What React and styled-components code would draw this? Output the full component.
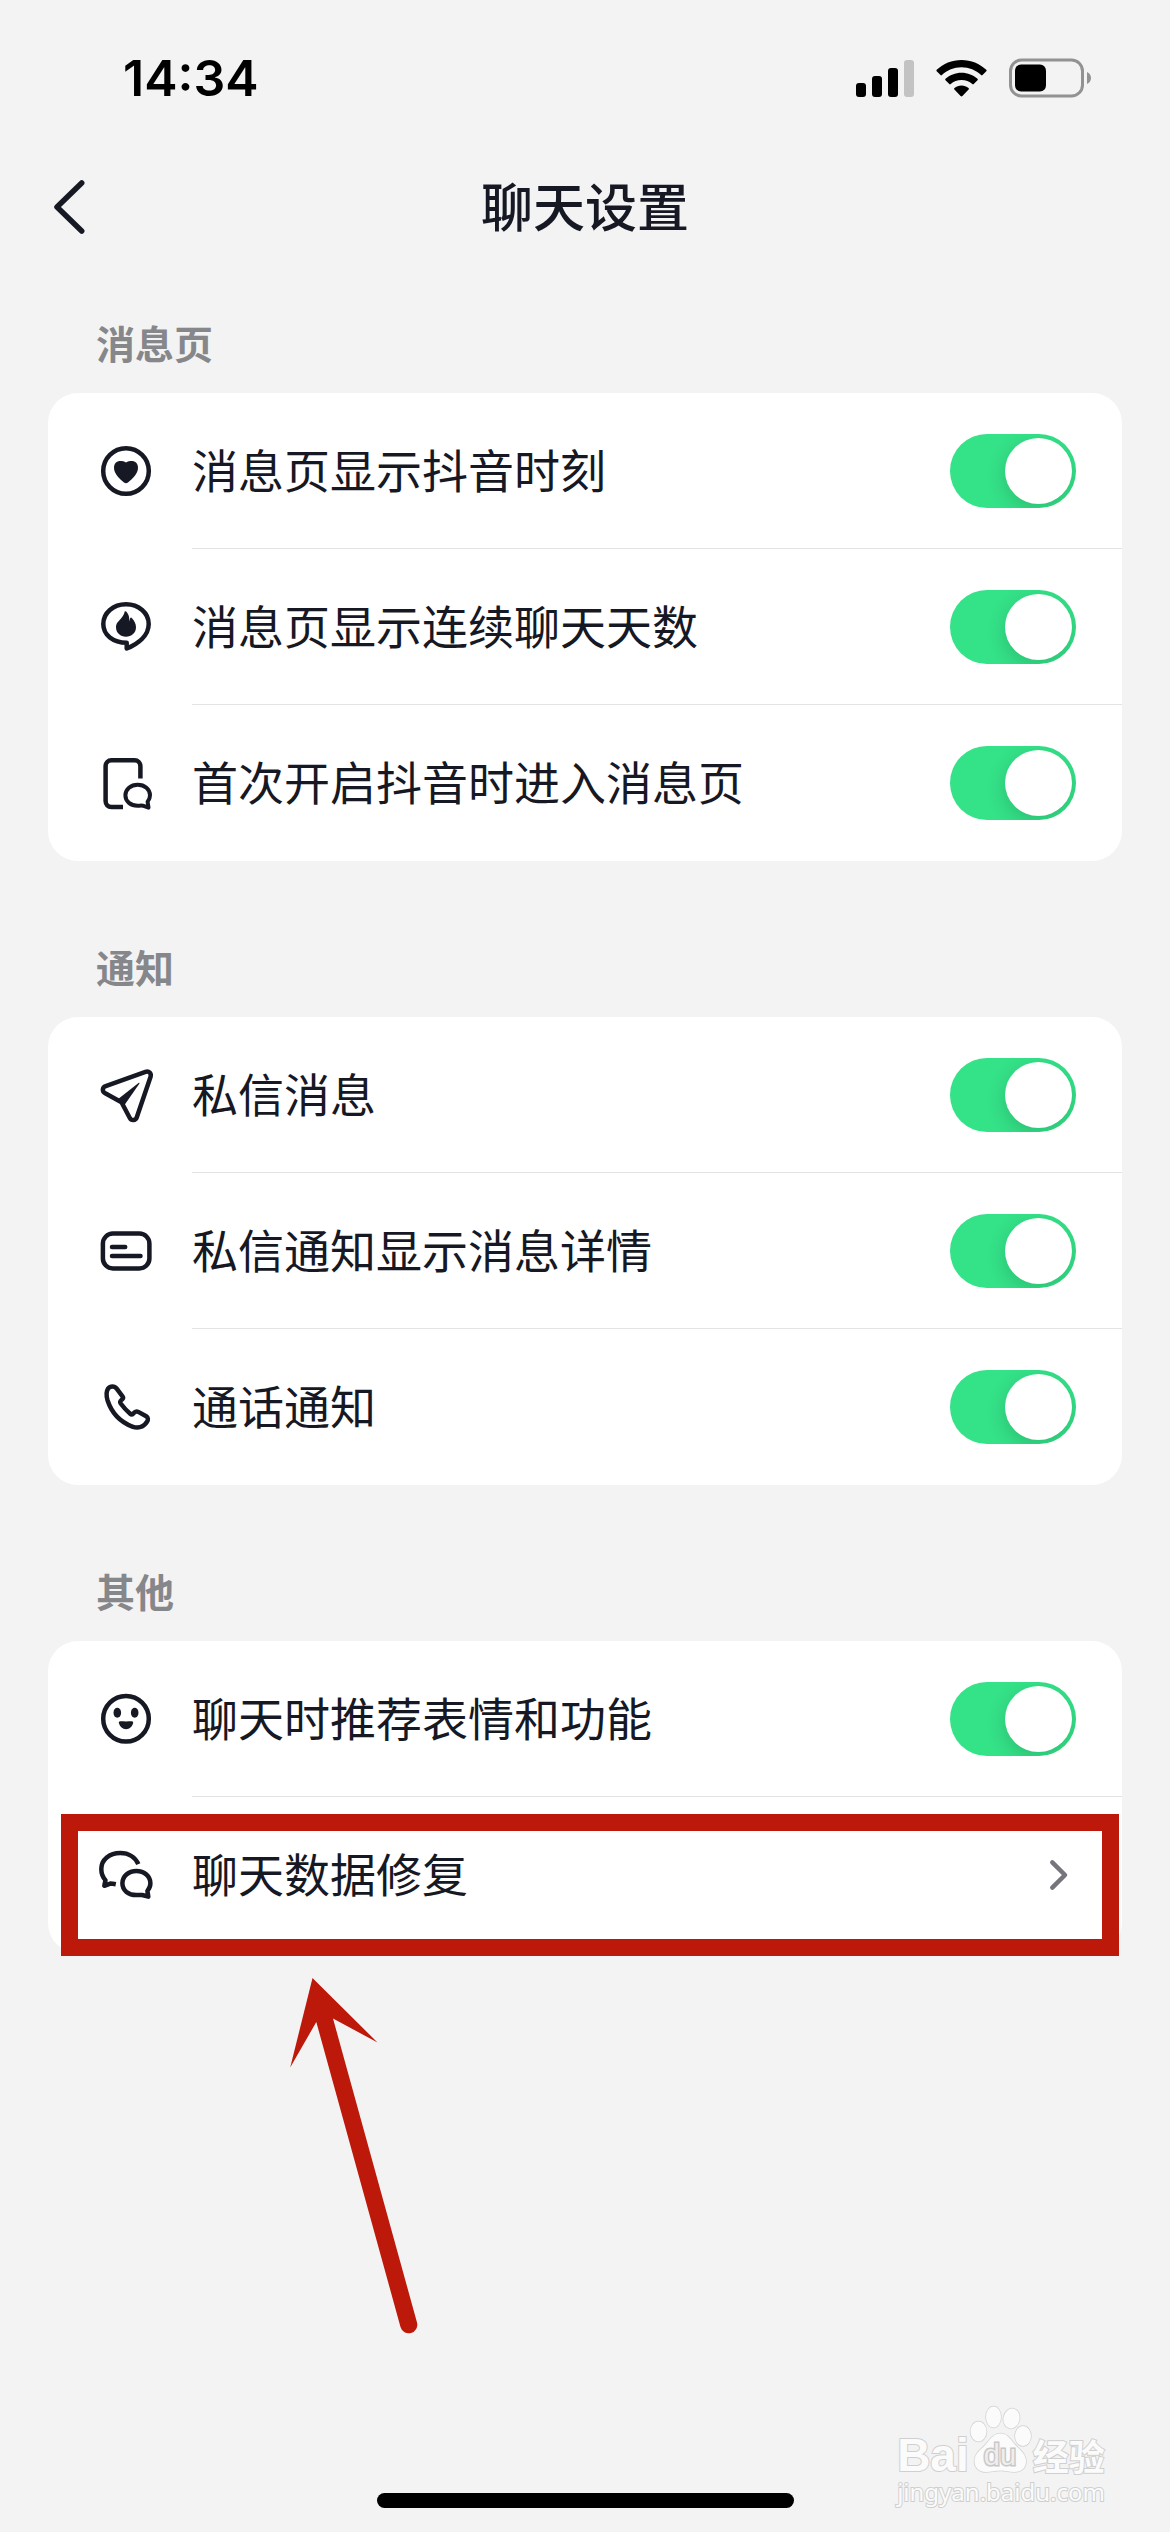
import React from 'react';
import styled, { createGlobalStyle } from 'styled-components';

const GlobalStyle = createGlobalStyle`
  * {
    box-sizing: border-box;
  }

  body {
    margin: 0;
    background: #f3f3f3;
    color: #161823;
    font-family: 'Noto Sans CJK SC', sans-serif;
  }
`;

const Page = styled.div`
  position: relative;
  display: flex;
  flex-direction: column;
  min-height: 100vh;
`;

const StatusBar = styled.div`
  display: flex;
  align-items: center;
  justify-content: space-between;
  height: 141px;
  padding: 15px 78px 0 123px;
`;

const Time = styled.span`
  color: #000;
  font-family: Inter, sans-serif;
  font-size: 50px;
  font-weight: 600;
  line-height: 60px;
`;

const StatusIcons = styled.div`
  display: flex;
  align-items: center;
  gap: 22px;
`;

const NavBar = styled.header`
  display: grid;
  grid-template-columns: 1fr auto 1fr;
  align-items: center;
  height: 132px;
  padding: 0 48px;
`;

const BackButton = styled.button`
  display: flex;
  width: 60px;
  padding: 0;
  border: 0;
  background: none;
  color: inherit;
`;

const Title = styled.h1`
  margin: 0;
  padding-bottom: 4px;
  font-size: 52px;
  font-weight: 500;
  line-height: 72px;
`;

const Content = styled.main`
  display: flex;
  flex-direction: column;
  gap: 78px;
  padding: 42px 48px 0;
`;

const SectionTitle = styled.h2`
  margin: 0 0 24px;
  padding-left: 48px;
  color: #86878b;
  font-size: 39px;
  font-weight: 600;
  line-height: 54px;
`;

const Card = styled.div`
  border-radius: 30px;
  background: #fff;
`;

const Row = styled.label`
  position: relative;
  display: flex;
  align-items: center;
  gap: 36px;
  height: 156px;
  padding-left: 48px;
  color: inherit;
  text-decoration: none;
`;

const RowBody = styled.span`
  display: flex;
  flex: 1;
  align-items: center;
  justify-content: space-between;
  height: 100%;
  padding-right: 46px;
  border-bottom: ${props => (props.$last ? '0' : '1px solid #e3e3e5')};
`;

const RowText = styled.span`
  padding-bottom: 6px;
  font-size: 46px;
  line-height: 66px;
`;

const Switch = styled.input`
  display: flex;
  align-items: center;
  justify-content: flex-start;
  width: 126px;
  height: 74px;
  margin: 0;
  padding: 0 4px;
  overflow: hidden;
  border-radius: 37px;
  background: #d8d8da;
  appearance: none;

  &::before {
    content: '';
    width: 67px;
    height: 66px;
    border-radius: 50%;
    background: #fff;
    box-shadow: 0 6px 20px rgba(0, 0, 0, 0.16);
  }

  &:checked {
    justify-content: flex-end;
    background: #34e288;
  }
`;

const Highlight = styled.span`
  position: absolute;
  top: 17px;
  right: 3px;
  bottom: -3px;
  left: 13px;
  border: 17px solid #bc190a;
`;

const Arrow = styled.svg`
  display: block;
  width: 130px;
  height: 358px;
  margin: 25px 0 0 289px;
`;

const HomeIndicator = styled.div`
  width: 417px;
  height: 15px;
  margin: auto auto 24px;
  border-radius: 8px;
  background: #000;
`;

const Watermark = styled.div`
  position: absolute;
  right: 65px;
  bottom: 25px;
  color: #fbfbfb;
  paint-order: stroke fill;
  -webkit-text-stroke: 2px #cfcfcf;
`;

const WatermarkBrand = styled.div`
  display: flex;
  align-items: baseline;
  height: 72px;

  svg {
    overflow: visible;
  }
`;

const WatermarkLatin = styled.span`
  font-family: 'Liberation Sans', Arial, sans-serif;
  font-size: 46px;
  font-weight: 700;
  line-height: 46px;
`;

const WatermarkHan = styled.span`
  font-size: 36px;
  font-weight: 700;
  line-height: 36px;
`;

const WatermarkUrl = styled.div`
  font-family: 'Noto Sans', sans-serif;
  font-size: 24px;
  line-height: 30px;
`;

function Icon({ children }) {
    return (
        <svg
            width="60"
            height="60"
            viewBox="0 0 60 60"
            fill="none"
            stroke="currentColor"
            strokeWidth="4.5"
            strokeLinecap="round"
            strokeLinejoin="round"
            aria-hidden="true"
        >
            {children}
        </svg>
    );
}

const HeartIcon = () => (
    <Icon>
        <circle cx="30" cy="30" r="22.8" />
        <path
            fill="currentColor"
            stroke="none"
            d="M30 21.5C28.2 20.2 26.2 20 24.500 20C20.500 20 18 22.700 18 26.800C18 32.800 23.500 38 28 41.500C29.400 42.600 30.600 42.600 32 41.500C36.500 38 42 32.800 42 26.800C42 22.700 39.500 20 35.500 20C33.800 20 31.800 20.200 30 21.500Z"
        />
    </Icon>
);

const StreakIcon = () => (
    <Icon>
        <path d="M30 7.300C17.200 7.300 7.300 16 7.300 27C7.300 38 17 45.800 30.700 45.800V51.500C42 46.800 52.700 38.500 52.700 27C52.700 16 42.800 7.300 30 7.300Z" />
        <path
            fill="currentColor"
            stroke="none"
            d="M28.700 14.600C29.200 13.900 30.200 14.400 31 15.500C32.700 17.800 33.600 20.500 33.300 24.500L34.200 21.300C34.500 20.300 35.400 20.500 36 21.200C38.400 23.600 40 26.800 40 30.300C40 36 35.500 39.700 30 39.700C24.500 39.700 20 36 20 30.300C20 26.500 22.300 24.500 24.800 21.800C26.800 19.500 28.200 17.500 28.700 14.600Z"
        />
    </Icon>
);

const LaunchIcon = () => (
    <Icon>
        <path strokeLinecap="butt" d="M44.400 25.600V13.300C44.400 9.800 42 7.300 38.500 7.300H15.500C12 7.300 9.600 9.800 9.600 13.300V48C9.600 51.500 12 54 15.500 54H27" />
        <path strokeWidth="4" d="M41.700 31.700C34.800 31.700 29.400 36.200 29.400 42.300C29.400 48.600 34.800 52.700 41.500 52.700C43.500 52.700 45.200 52.500 46.800 52.700L52.500 54.600L51.600 48.800C53.200 46.800 54 44.800 54 42.300C54 36.200 48.600 31.700 41.700 31.700Z" />
    </Icon>
);

const PlaneIcon = () => (
    <Icon>
        <path d="M25.500 37.300L9.200 28.300C5.800 26.400 6.200 22.400 9.700 21.200L49.500 6.900C53 5.700 55.700 8.400 54.500 12L40.700 52.500C39.600 55.600 35.400 55.900 33.800 53Z" />
        <path fill="currentColor" stroke="none" d="M21.500 34.500L42.500 18C43.200 17.600 43.700 18.100 43.300 18.800L28.500 40Z" />
    </Icon>
);

const DetailIcon = () => (
    <Icon>
        <rect x="6.900" y="12.600" width="46.500" height="34.800" rx="10" />
        <path d="M16 26.100H29.200M16 35.100H44.500" />
    </Icon>
);

const PhoneIcon = () => (
    <Icon>
        <path d="M12 11.700C14.300 8.700 18.500 8.700 20.700 11.700L26.500 19.300C27.500 20.600 27.200 21.500 26 22.500C24.200 24 23.300 24.600 24.700 26.500C27.500 30.300 30.600 33.700 34.200 36.800C35.500 37.900 36.300 37.700 37.300 36.500C38.700 34.800 40.200 33.800 42.300 34.900L50.200 39.300C52.200 40.500 52.400 42.800 51 44.800C47.700 50 42.200 51.800 36.300 49.600C24.500 45 15.500 35.500 11.600 23.500C10.400 19.500 10.200 14.500 12 11.700Z" />
    </Icon>
);

const SmileIcon = () => (
    <Icon>
        <circle cx="30" cy="29.800" r="22.800" />
        <g fill="currentColor" stroke="none">
            <ellipse cx="21.300" cy="23.700" rx="3.800" ry="5" />
            <ellipse cx="38.700" cy="23.700" rx="3.800" ry="5" />
            <path d="M24.500 32.300C28 32.500 32 32.500 35.500 32.300C36.800 32.200 37.500 33 37.100 34.300C36 38 33.500 40.200 30 40.200C26.500 40.200 24 38 22.900 34.300C22.500 33 23.200 32.200 24.500 32.300Z" />
        </g>
    </Icon>
);

const ChatsIcon = () => (
    <Icon>
        <path strokeLinecap="butt" d="M42.300 19.200C39.500 12.500 32.800 8 24.300 8C13.500 8 5.300 14.500 5.300 24C5.300 28.700 6.700 32.200 9.500 35.200L8.300 40.800L14.300 38.600C15.800 38.500 17.300 38.800 19.800 39.300" />
        <path d="M40.400 26C32.500 26 26.400 31.200 26.400 38.300C26.400 45.600 32.500 50 40.200 50C42.500 50 44.300 49.700 46.200 50L52.300 51.700L51.400 45.900C53.300 43.700 54.400 41.300 54.400 38.300C54.400 31.200 48.300 26 40.400 26Z" />
    </Icon>
);

const sections = [
    {
        title: '消息页',
        rows: [
            { text: '消息页显示抖音时刻', icon: HeartIcon },
            { text: '消息页显示连续聊天天数', icon: StreakIcon },
            { text: '首次开启抖音时进入消息页', icon: LaunchIcon },
        ],
    },
    {
        title: '通知',
        rows: [
            { text: '私信消息', icon: PlaneIcon },
            { text: '私信通知显示消息详情', icon: DetailIcon },
            { text: '通话通知', icon: PhoneIcon },
        ],
    },
    {
        title: '其他',
        rows: [
            { text: '聊天时推荐表情和功能', icon: SmileIcon },
            { text: '聊天数据修复', icon: ChatsIcon, href: '#repair', highlighted: true },
        ],
    },
];

function SettingRow({ row, last }) {
    const RowIcon = row.icon;
    return (
        <Row as={row.href ? 'a' : 'label'} href={row.href}>
            <RowIcon />
            <RowBody $last={last}>
                <RowText>{row.text}</RowText>
                {row.href ? (
                    <svg width="30" height="36" viewBox="0 0 30 36" fill="none" stroke="#75767c" strokeWidth="4.500" strokeLinecap="round" strokeLinejoin="round" aria-hidden="true">
                        <path d="M6.300 5.300L19 18L6.300 30.700" />
                    </svg>
                ) : (
                    <Switch type="checkbox" role="switch" defaultChecked />
                )}
            </RowBody>
            {row.highlighted ? <Highlight /> : null}
        </Row>
    );
}

function PhoneStatus() {
    return (
        <StatusBar>
            <Time>14:34</Time>
            <StatusIcons>
                <svg width="58" height="38" viewBox="0 0 58 38" aria-hidden="true">
                    <rect x="0" y="24" width="10" height="14" rx="3" />
                    <rect x="16" y="17" width="10" height="21" rx="3" />
                    <rect x="32" y="9" width="10" height="29" rx="3" />
                    <rect x="48" y="1" width="10" height="37" rx="3" fill="#c3c3c3" />
                </svg>
                <svg width="51" height="38" viewBox="0 0 51 38" aria-hidden="true">
                    <path d="M25.500 1C35 1 43.800 4.700 50.300 10.800C50.800 11.300 50.800 11.800 50.300 12.300L46.500 16.100C46 16.500 45.600 16.500 45.100 16.100C39.900 11.200 33 8.300 25.500 8.300C18 8.300 11.100 11.200 5.900 16.100C5.400 16.500 5 16.500 4.500 16.100L.700 12.300C.200 11.800 .200 11.300 .700 10.800C7.200 4.700 16 1 25.500 1Z" />
                    <path d="M25.500 13.700C31.700 13.700 37.300 16 41.500 19.800C42 20.300 42 20.800 41.500 21.300L37.700 25.100C37.200 25.600 36.800 25.500 36.300 25.100C33.400 22.500 29.700 21 25.500 21C21.300 21 17.600 22.500 14.700 25.100C14.200 25.500 13.800 25.600 13.300 25.100L9.500 21.300C9 20.800 9 20.300 9.500 19.800C13.700 16 19.300 13.700 25.500 13.700Z" />
                    <path d="M25.500 26.500C28.200 26.500 30.600 27.400 32.500 28.900C33.100 29.400 33.100 29.900 32.600 30.400L26.400 37C25.800 37.600 25.200 37.600 24.600 37L18.400 30.400C17.900 29.900 17.900 29.400 18.500 28.900C20.400 27.400 22.800 26.500 25.500 26.500Z" />
                </svg>
                <svg width="83" height="40" viewBox="0 0 83 40" aria-hidden="true">
                    <rect x="1.500" y="2" width="72" height="36" rx="11" fill="none" stroke="#929292" strokeWidth="3" />
                    <rect x="6" y="6.500" width="31" height="27" rx="6" />
                    <path d="M78 14V26C80.300 25 82 22.700 82 20C82 17.300 80.300 15 78 14Z" fill="#929292" />
                </svg>
            </StatusIcons>
        </StatusBar>
    );
}

function BaiduWatermark() {
    return (
        <Watermark>
            <WatermarkBrand>
                <WatermarkLatin>Bai</WatermarkLatin>
                <svg width="64" height="66" viewBox="0 0 64 66" aria-hidden="true">
                    <g fill="#fbfbfb" stroke="#d2d2d2" strokeWidth="1.500">
                        <ellipse cx="9.500" cy="26.500" rx="8" ry="10" />
                        <ellipse cx="24.500" cy="12" rx="7.500" ry="10.500" />
                        <ellipse cx="42.500" cy="13.500" rx="8" ry="10" transform="rotate(12 42.500 13.500)" />
                        <ellipse cx="54" cy="31" rx="8" ry="10" />
                        <path d="M31.500 28.500C38 28.500 41 33.500 45 38.500C50 44.500 57 48 57 56.500C57 63.500 51.500 67 45.500 67C40.500 67 37 65.500 31.500 65.500C26 65.500 22 67 17 67C10.500 67 5.500 63 5.500 56C5.500 48 12.500 44.500 17.500 38.500C21.500 33.500 25 28.500 31.500 28.500Z" />
                    </g>
                    <text x="31" y="60" textAnchor="middle" fontFamily="Liberation Sans, Arial, sans-serif" fontSize="29" fill="#eeeeee" stroke="#c8c8c8" strokeWidth="3">du</text>
                </svg>
                <WatermarkHan>经验</WatermarkHan>
            </WatermarkBrand>
            <WatermarkUrl>jingyan.baidu.com</WatermarkUrl>
        </Watermark>
    );
}

export default function App() {
    return (
        <Page>
            <GlobalStyle />
            <PhoneStatus />
            <NavBar>
                <BackButton type="button" aria-label="返回">
                    <svg width="60" height="60" viewBox="0 0 60 60" fill="none" stroke="currentColor" strokeWidth="5.500" strokeLinecap="round" strokeLinejoin="round" aria-hidden="true">
                        <path d="M33.700 6L9 30L33.700 54" />
                    </svg>
                </BackButton>
                <Title>聊天设置</Title>
            </NavBar>
            <Content>
                {sections.map(section => (
                    <section key={section.title}>
                        <SectionTitle>{section.title}</SectionTitle>
                        <Card>
                            {section.rows.map((row, i) => (
                                <SettingRow key={row.text} row={row} last={i === section.rows.length - 1} />
                            ))}
                        </Card>
                    </section>
                ))}
            </Content>
            <Arrow viewBox="0 0 130 358" fill="#bc190a" aria-hidden="true">
                <path d="M23.500 0L88.500 64.500L44 40.500L128 344.500A8.500 8.500 0 0 1 111.500 349L27.300 44L1.200 89.500Z" />
            </Arrow>
            <HomeIndicator />
            <BaiduWatermark />
        </Page>
    );
}
